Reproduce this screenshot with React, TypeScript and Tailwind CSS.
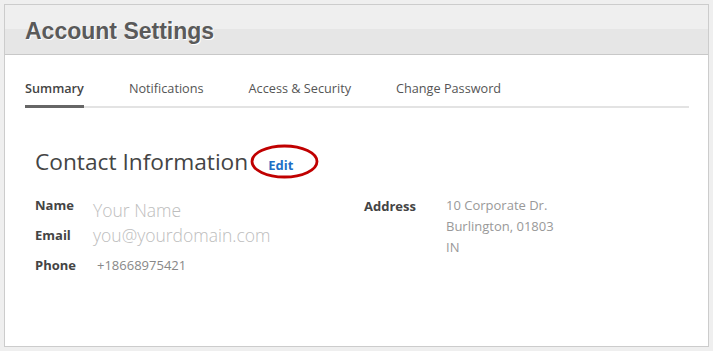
const tabs = ["Summary", "Notifications", "Access & Security", "Change Password"];

const App = () => {
  return (
    <div
      className="w-[713px] h-[351px] bg-[#efefef] pt-[4px] pl-[4px] pr-[4px] pb-[4px]"
      style={{ fontFamily: '"Open Sans", Arial, sans-serif' }}
    >
      <div className="h-full border border-[#cccccc] bg-white flex flex-col">
        {/* header */}
        <div className="h-[50px] border-b border-[#c8c8c8] bg-[linear-gradient(to_bottom,#efefef_0%,#efefef_50%,#e6e6e6_50%,#e6e6e6_100%)] px-[20px] flex items-center">
          <h1
            className="text-[23px] font-bold text-[#5a5a5a] mt-[3px] [text-shadow:1px_1px_0_#ffffff]"
            style={{ fontFamily: '"Liberation Sans", Arial, sans-serif' }}
          >
            Account Settings
          </h1>
        </div>

        {/* tabs */}
        <div className="pl-[20px] pr-[19px] pt-[24px]">
          <div className="flex gap-[45px] border-b-2 border-[#e3e3e3]">
            {tabs.map((tab, i) => (
              <div
                key={tab}
                className={`text-[12.7px] pb-[7px] -mb-[2px] ${
                  i === 0
                    ? "font-semibold text-[#444] border-b-[3px] border-[#666]"
                    : "text-[#555] border-b-[3px] border-transparent"
                }`}
              >
                {tab}
              </div>
            ))}
          </div>
        </div>

        {/* contact info */}
        <div className="pl-[30px] pt-[40px]">
          <div className="flex items-center">
            <h2 className="text-[22.7px] font-medium text-[#444] leading-[28px]">Contact Information</h2>
            <div className="relative ml-[20px] mt-[3px]">
              <span className="text-[13px] font-bold text-[#1d6fc6]">Edit</span>
              <svg
                className="absolute left-[-18px] top-[-8px]"
                width="70"
                height="36"
                viewBox="0 0 70 36"
              >
                <ellipse cx="34.5" cy="17.5" rx="32.5" ry="15.5" fill="none" stroke="#c00000" strokeWidth="2.8" />
              </svg>
            </div>
          </div>

          <div className="flex mt-[15px]">
            <div className="w-[329px]">
              <div className="flex items-center h-[30px]">
                <span className="text-[13px] font-bold text-[#444] w-[58px]">Name</span>
                <span className="text-[17.5px] text-[#bdbdbd] font-light mt-[8px]">Your Name</span>
              </div>
              <div className="flex items-center h-[30px]">
                <span className="text-[13px] font-bold text-[#444] w-[58px]">Email</span>
                <span className="text-[17.5px] text-[#bdbdbd] font-light -mt-[2px]">you@yourdomain.com</span>
              </div>
              <div className="flex items-center h-[30px]">
                <span className="text-[13px] font-bold text-[#444] w-[62px]">Phone</span>
                <span className="text-[13px] text-[#888]">+18668975421</span>
              </div>
            </div>
            <div className="flex">
              <span className="text-[13px] font-bold text-[#444] w-[82px] leading-[30px]">Address</span>
              <div className="text-[13px] text-[#999] leading-[21px] pt-[4px]">
                <div>10 Corporate Dr.</div>
                <div>Burlington, 01803</div>
                <div>IN</div>
              </div>
            </div>
          </div>
        </div>
      </div>
    </div>
  );
};

export default App;
